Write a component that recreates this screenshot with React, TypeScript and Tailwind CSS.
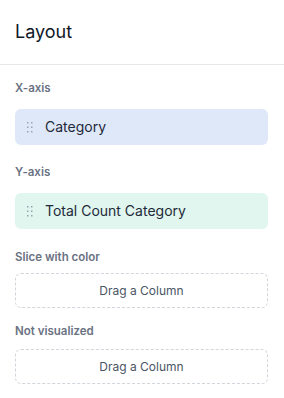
const Grip = () => (
  <svg width="6" height="11" viewBox="0 0 6 11" className="shrink-0 text-gray-400" fill="currentColor">
    <rect x="0" y="0" width="1.5" height="1.5" />
    <rect x="4" y="0" width="1.5" height="1.5" />
    <rect x="0" y="4.5" width="1.5" height="1.5" />
    <rect x="4" y="4.5" width="1.5" height="1.5" />
    <rect x="0" y="9" width="1.5" height="1.5" />
    <rect x="4" y="9" width="1.5" height="1.5" />
  </svg>
);

const Label = ({ children }: { children: string }) => (
  <div className="text-[11.5px] font-semibold leading-4 text-gray-500">{children}</div>
);

const Pill = ({ label, tone }: { label: string; tone: "blue" | "green" }) => (
  <div
    className={
      "flex h-9 items-center gap-[12px] rounded-md px-3 text-sm text-gray-800 " +
      (tone === "blue" ? "bg-[#dfe8f9]" : "bg-[#e0f6ee]")
    }
  >
    <Grip />
    <span>{label}</span>
  </div>
);

const DropZone = () => (
  <div className="flex h-[35px] items-center justify-center rounded-md border border-dashed border-gray-300 text-xs text-gray-600">
    Drag a Column
  </div>
);

export default function App() {
  return (
    <div className="h-[398px] w-[284px] bg-white font-['Inter',sans-serif]">
      <div className="flex h-[65px] items-center border-b border-gray-200 pl-[15px]">
        <h2 className="text-lg text-gray-900">Layout</h2>
      </div>
      <div className="flex flex-col pl-[15px] pr-4 pt-[15px]">
        <Label>X-axis</Label>
        <div className="mt-[13px]">
          <Pill label="Category" tone="blue" />
        </div>
        <div className="mt-[19px]">
          <Label>Y-axis</Label>
        </div>
        <div className="mt-[13px]">
          <Pill label="Total Count Category" tone="green" />
        </div>
        <div className="mt-5">
          <Label>Slice with color</Label>
        </div>
        <div className="mt-2">
          <DropZone />
        </div>
        <div className="mt-[15px]">
          <Label>Not visualized</Label>
        </div>
        <div className="mt-[10px]">
          <DropZone />
        </div>
      </div>
    </div>
  );
}
